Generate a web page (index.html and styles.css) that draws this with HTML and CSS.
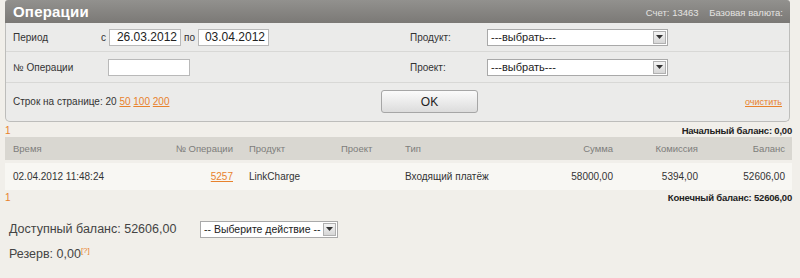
FILE: index.html
```html
<!DOCTYPE html>
<html lang="ru">
<head>
<meta charset="utf-8">
<title>Операции</title>
<link rel="stylesheet" href="styles.css">
</head>
<body>
<div class="wrap">
  <div class="head">
    <div class="title">Операции</div>
    <div class="info">Счет: 13463 <span class="sp"></span>Базовая валюта:</div>
  </div>
  <div class="panel">
    <div class="frow r1">
      <div class="fleft">
        <span class="lbl l1">Период</span>
        <span class="pre">с</span>
        <span class="inp d1">26.03.2012</span>
        <span class="pre po">по</span>
        <span class="inp d2">03.04.2012</span>
      </div>
      <div class="fright">
        <span class="lbl l2">Продукт:</span>
        <span class="sel"><span class="stext">---выбрать---</span><span class="arrow"><svg width="7" height="4" viewBox="0 0 7 4"><path d="M0 0H7L3.5 4Z" fill="#333"/></svg></span></span>
      </div>
    </div>
    <div class="frow r2">
      <div class="fleft">
        <span class="lbl l3">№ Операции</span>
        <span class="inp n1"></span>
      </div>
      <div class="fright">
        <span class="lbl l2">Проект:</span>
        <span class="sel"><span class="stext">---выбрать---</span><span class="arrow"><svg width="7" height="4" viewBox="0 0 7 4"><path d="M0 0H7L3.5 4Z" fill="#333"/></svg></span></span>
      </div>
    </div>
    <div class="frow r3">
      <div class="rows">Строк на странице: 20 <a class="lnk">50</a> <a class="lnk">100</a> <a class="lnk">200</a></div>
      <button class="ok">OK</button>
      <a class="clear">очистить</a>
    </div>
  </div>
  <div class="sum">
    <span class="pg">1</span>
    <span class="bal">Начальный баланс: 0,00</span>
  </div>
  <table class="ops">
    <colgroup>
      <col class="c1"><col class="c2"><col class="c3"><col class="c4"><col class="c5"><col class="c6"><col class="c7"><col class="c8">
    </colgroup>
    <thead>
      <tr>
        <th>Время</th><th class="r">№ Операции</th><th>Продукт</th><th>Проект</th><th>Тип</th><th class="r">Сумма</th><th class="r">Комиссия</th><th class="r">Баланс</th>
      </tr>
    </thead>
    <tbody>
      <tr>
        <td>02.04.2012 11:48:24</td><td class="r"><a class="lnk">5257</a></td><td>LinkCharge</td><td></td><td>Входящий платёж</td><td class="r">58000,00</td><td class="r">5394,00</td><td class="r">52606,00</td>
      </tr>
    </tbody>
  </table>
  <div class="sum s2">
    <span class="pg">1</span>
    <span class="bal">Конечный баланс: 52606,00</span>
  </div>
  <div class="avail">
    <span class="atext">Доступный баланс: 52606,00</span>
    <span class="sel act"><span class="stext">-- Выберите действие --</span><span class="arrow"><svg width="7" height="4" viewBox="0 0 7 4"><path d="M0 0H7L3.5 4Z" fill="#333"/></svg></span></span>
  </div>
  <div class="reserve">Резерв: 0,00<sup class="q">[?]</sup></div>
</div>
</body>
</html>
```
FILE: styles.css
```css
html, body { margin: 0; padding: 0; }
body {
  background: #f1efea;
  font-family: "Liberation Sans", Arial, sans-serif;
  color: #333;
  width: 800px;
  height: 278px;
  overflow: hidden;
}
.wrap { width: 787px; margin-left: 5px; }

.head {
  width: 785px;
  height: 23px;
  background: linear-gradient(#92918e, #7b7976);
  border-radius: 3px 3px 0 0;
  display: flex;
  justify-content: space-between;
  align-items: center;
}
.title { color: #fff; font-weight: bold; font-size: 15px; padding-left: 8px; letter-spacing: 0.2px; }
.info { color: #e4e3e1; font-size: 9.5px; padding-right: 7px; padding-top: 1px; }
.sp { display: inline-block; width: 8px; }

.panel {
  width: 783px;
  height: 98px;
  background: #ebebea;
  border: 1px solid #bdbdbb;
  border-top: none;
  border-radius: 0 0 5px 5px;
  font-size: 10px;
}
.frow { display: flex; align-items: center; box-sizing: border-box; }
.r1 { height: 29px; border-bottom: 1px solid #d8d8d6; }
.r2 { height: 31px; border-bottom: 1px solid #d8d8d6; }
.r3 { height: 37px; }
.fleft { width: 404px; display: flex; align-items: center; padding-left: 7px; box-sizing: border-box; }
.fright { display: flex; align-items: center; }
.lbl { display: inline-block; }
.l1 { width: 88px; }
.l3 { width: 95px; }
.l2 { width: 77px; }
.pre { margin-right: 3px; }
.po { margin-left: 3px; }
.inp {
  display: inline-block;
  height: 17px;
  background: #fff;
  border: 1px solid #b9b9b9;
  box-sizing: border-box;
  font-size: 12px;
  line-height: 15px;
  text-align: right;
  padding-right: 3px;
  color: #222;
}
.d1 { width: 72px; }
.d2 { width: 71px; }
.n1 { width: 82px; }

.sel {
  display: inline-flex;
  align-items: center;
  justify-content: space-between;
  width: 181px;
  height: 17px;
  background: #fff;
  border: 1px solid #a9a9a9;
  box-sizing: border-box;
  font-size: 11px;
  color: #222;
  white-space: nowrap;
}
.stext { padding-left: 3px; }
.arrow {
  width: 13px;
  height: 13px;
  margin-right: 1px;
  background: linear-gradient(#f4f4f4, #d6d6d6);
  border: 1px solid #b0b0b0;
  box-sizing: border-box;
  display: flex;
  align-items: center;
  justify-content: center;
  flex: none;
}

.rows { width: 375px; padding-left: 7px; box-sizing: border-box; }
.lnk { color: #e8822c; text-decoration: underline; }
.ok {
  width: 97px;
  height: 23px;
  margin: 0;
  padding: 0;
  border: 1px solid #a6a6a6;
  border-radius: 3px;
  background: linear-gradient(#fbfbfb, #dcdcdc);
  font-family: "Liberation Sans", Arial, sans-serif;
  font-size: 12px;
  color: #222;
}
.clear {
  margin-left: auto;
  margin-right: 7px;
  font-size: 9px;
  color: #e8822c;
  text-decoration: underline;
}

.sum {
  display: flex;
  justify-content: space-between;
  align-items: center;
  height: 13px;
  margin-top: 2px;
  font-size: 9.5px;
}
.pg { color: #e8822c; font-size: 10px; }
.bal { font-weight: bold; color: #222; letter-spacing: -0.2px; }
.s2 { margin-top: 1px; }

.ops { width: 787px; border-collapse: collapse; table-layout: fixed; font-size: 10px; }
.c1 { width: 155px; } .c2 { width: 81px; } .c3 { width: 92px; } .c4 { width: 64px; }
.c5 { width: 133px; } .c6 { width: 91px; } .c7 { width: 85px; } .c8 { width: 86px; }
.ops th {
  height: 23px;
  padding: 0 8px;
  background: #d9d7d1;
  color: #7d7d7b;
  font-weight: normal;
  text-align: left;
  font-size: 9.5px;
}
.ops td {
  height: 27px;
  padding: 0 8px;
  background: #f8f7f3;
  border-top: 3px solid #f1efea;
  color: #333;
  white-space: nowrap;
}
.ops th:last-child, .ops td:last-child { padding-right: 7px; }
.ops .r { text-align: right; }

.avail {
  display: flex;
  align-items: center;
  height: 20px;
  margin-top: 15px;
  padding-left: 4px;
  font-size: 12.5px;
  color: #444;
}
.atext { width: 191px; }
.act { width: 138px; font-size: 10.5px; }
.reserve {
  height: 20px;
  line-height: 20px;
  margin-top: 2px;
  padding-left: 4px;
  font-size: 12.5px;
  color: #444;
}
.q { color: #e8822c; font-size: 8px; vertical-align: 5px; }
```
